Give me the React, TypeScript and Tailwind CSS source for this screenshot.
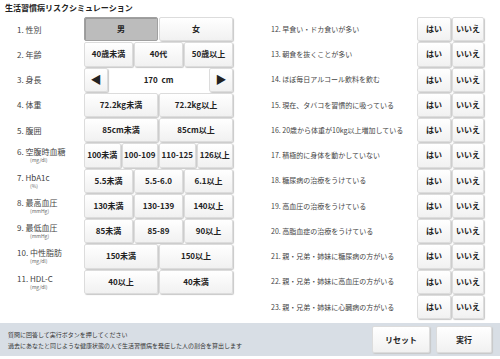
import React from "react"

const font = { fontFamily: '"Noto Sans CJK JP", "Noto Sans", sans-serif' }

type Item = { label: string; unit?: string; options?: string[]; selected?: number; height?: boolean }

const leftItems: Item[] = [
  { label: "1. 性別", options: ["男", "女"], selected: 0 },
  { label: "2. 年齢", options: ["40歳未満", "40代", "50歳以上"] },
  { label: "3. 身長", height: true },
  { label: "4. 体重", options: ["72.2kg未満", "72.2kg以上"] },
  { label: "5. 腹囲", options: ["85cm未満", "85cm以上"] },
  { label: "6. 空腹時血糖", unit: "(mg/dl)", options: ["100未満", "100-109", "110-125", "126以上"] },
  { label: "7. HbA1c", unit: "(%)", options: ["5.5未満", "5.5-6.0", "6.1以上"] },
  { label: "8. 最高血圧", unit: "(mmHg)", options: ["130未満", "130-139", "140以上"] },
  { label: "9. 最低血圧", unit: "(mmHg)", options: ["85未満", "85-89", "90以上"] },
  { label: "10. 中性脂肪", unit: "(mg/dl)", options: ["150未満", "150以上"] },
  { label: "11. HDL-C", unit: "(mg/dl)", options: ["40以上", "40未満"] },
]

const rightItems = [
  "12. 早食い・ドカ食いが多い",
  "13. 朝食を抜くことが多い",
  "14. ほぼ毎日アルコール飲料を飲む",
  "15. 現在、タバコを習慣的に吸っている",
  "16. 20歳から体重が10kg以上増加している",
  "17. 積極的に身体を動かしていない",
  "18. 糖尿病の治療をうけている",
  "19. 高血圧の治療をうけている",
  "20. 高脂血症の治療をうけている",
  "21. 親・兄弟・姉妹に糖尿病の方がいる",
  "22. 親・兄弟・姉妹に高血圧の方がいる",
  "23. 親・兄弟・姉妹に心臓病の方がいる",
]

function Btn({ children, active, className = "" }: { children: React.ReactNode; active?: boolean; className?: string }) {
  return (
    <button
      className={`flex items-center justify-center h-full rounded-[2px] border text-[8px] font-bold text-[#222] whitespace-nowrap ${
        active
          ? "bg-[#bcbcbc] border-[#a0a0a0] shadow-[inset_1px_1px_0_#9a9a9a]"
          : "bg-gradient-to-b from-white to-[#f1f1f1] border-[#dcdcdc] shadow-[1px_1px_1px_#c8c8c8]"
      } ${className}`}
    >
      {children}
    </button>
  )
}

export default function App() {
  return (
    <div className="w-[500px] h-[359px] bg-white flex flex-col text-[#333]" style={font}>
      <div className="h-[17px] pl-[5px] pt-[2px] text-[8px] font-bold text-[#222] leading-[12px]">
        生活習慣病リスクシミュレーション
      </div>

      <div className="flex h-[306px]">
        {/* left column */}
        <div className="w-[250px] flex flex-col gap-px">
          {leftItems.map((it) => (
            <div key={it.label} className="flex h-[24.25px]">
              <div className="w-[84px] pl-[17px] flex flex-col justify-center">
                <div className="text-[8px] leading-[9px] h-[9px] text-[#444] whitespace-nowrap">{it.label}</div>
                {it.unit && (
                  <div className="mt-px pl-[13px] text-[5px] leading-[6px] h-[6px] text-[#666] whitespace-nowrap">{it.unit}</div>
                )}
              </div>
              <div className="w-[149px] flex gap-px">
                {it.height ? (
                  <>
                    <Btn className="w-[24px] text-[11px]">◀</Btn>
                    <div className="flex-1 flex items-center justify-center text-[8px] font-bold text-[#222]">
                      170&nbsp;&nbsp;cm
                    </div>
                    <Btn className="w-[24px] text-[11px]">▶</Btn>
                  </>
                ) : (
                  it.options!.map((o, i) => (
                    <Btn key={o} active={it.selected === i} className="flex-1">
                      {o}
                    </Btn>
                  ))
                )}
              </div>
            </div>
          ))}
        </div>

        {/* right column */}
        <div className="flex-1 flex flex-col gap-px">
          {rightItems.map((t) => (
            <div key={t} className="flex h-[24.25px]">
              <div className="flex-1 pl-[21px] flex items-center text-[7px] text-[#444] whitespace-nowrap">{t}</div>
              <div className="w-[67px] mr-[16px] flex gap-px">
                <Btn className="w-[34px]">はい</Btn>
                <Btn className="flex-1">いいえ</Btn>
              </div>
            </div>
          ))}
        </div>
      </div>

      {/* footer */}
      <div className="h-[33px] bg-[#d8dee5] flex items-center">
        <div className="flex-1 pl-[8px] text-[6px] leading-[11px] text-[#333]">
          <p>質問に回答して実行ボタンを押してください</p>
          <p>過去にあなたと同じような健康状態の人で生活習慣病を発症した人の割合を算出します</p>
        </div>
        <div className="flex gap-[6px] pr-[8px] h-[27px]">
          <Btn className="w-[58px]">リセット</Btn>
          <Btn className="w-[56px]">実行</Btn>
        </div>
      </div>
    </div>
  )
}
